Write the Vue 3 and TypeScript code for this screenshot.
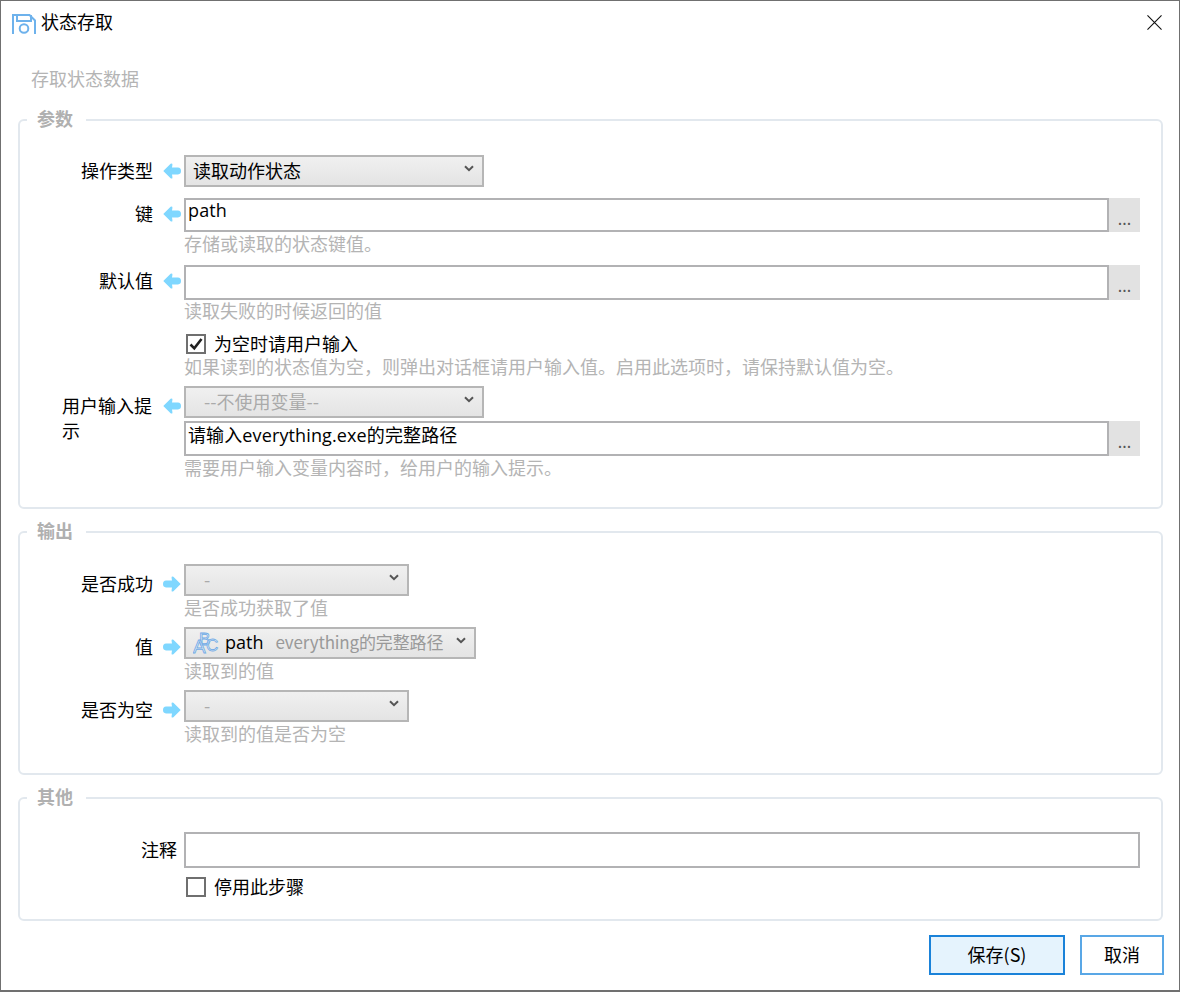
<script setup lang="ts">
interface OutputRow {
  label: string
  hint: string
  wide: boolean
}

const outputRows: OutputRow[] = [
  { label: '是否成功', hint: '是否成功获取了值', wide: false },
  { label: '值', hint: '读取到的值', wide: true },
  { label: '是否为空', hint: '读取到的值是否为空', wide: false },
]
</script>

<template>
  <div class="window">
    <svg width="0" height="0" class="defs">
      <symbol id="arrow-left" viewBox="0 0 18 16">
        <path d="M0.3 8 L7.6 0.8 Q9.6 -0.4 9.4 2 L9 4.6 H15 Q18 4.8 18 8 Q18 11.2 15 11.4 H9 L9.4 14 Q9.6 16.4 7.6 15.2 Z" fill="#7fd7ff" />
      </symbol>
      <symbol id="chevron" viewBox="0 0 10 7">
        <path d="M1 1.2 L5 5.2 L9 1.2" fill="none" stroke="#555" stroke-width="2" />
      </symbol>
    </svg>

    <header class="titlebar">
      <svg class="app-icon" width="26" height="22" viewBox="0 0 26 22" fill="none" stroke="#6eb2ec" stroke-width="2">
        <path d="M2 21 V2 H18.5 L24 7.5 V21" />
        <path d="M6 2 V8 H20 V2" />
        <circle cx="13" cy="15.5" r="4.3" />
      </svg>
      <span class="title">状态存取</span>
      <svg class="close" width="15" height="15" viewBox="0 0 16 16" stroke="#111" stroke-width="1.2">
        <path d="M0.5 0.5 L15.5 15.5 M15.5 0.5 L0.5 15.5" />
      </svg>
    </header>

    <p class="subtitle">存取状态数据</p>

    <section class="group group-params">
      <h2 class="legend">参数</h2>

      <div class="row">
        <label class="label">操作类型</label>
        <svg class="arrow" width="18" height="16"><use href="#arrow-left" /></svg>
        <div class="select select-main">
          <span>读取动作状态</span>
          <svg class="chev" width="10" height="7"><use href="#chevron" /></svg>
        </div>
      </div>

      <div class="row row-key">
        <label class="label">键</label>
        <svg class="arrow" width="18" height="16"><use href="#arrow-left" /></svg>
        <div>
          <div class="input-line">
            <div class="input">path</div>
            <div class="more">...</div>
          </div>
          <div class="hint">存储或读取的状态键值。</div>
        </div>
      </div>

      <div class="row row-default">
        <label class="label">默认值</label>
        <svg class="arrow" width="18" height="16"><use href="#arrow-left" /></svg>
        <div>
          <div class="input-line tall">
            <div class="input"></div>
            <div class="more">...</div>
          </div>
          <div class="hint hint-up">读取失败的时候返回的值</div>
        </div>
      </div>

      <div class="row row-check">
        <div class="control">
          <div class="check-line">
            <span class="checkbox">
              <svg width="16" height="16" viewBox="0 0 16 16" fill="none" stroke="#222" stroke-width="2.6">
                <path d="M2.5 8.5 L6.3 12.3 L13.5 3" />
              </svg>
            </span>
            <span class="check-text">为空时请用户输入</span>
          </div>
          <div class="hint">如果读到的状态值为空，则弹出对话框请用户输入值。启用此选项时，请保持默认值为空。</div>
        </div>
      </div>

      <div class="row row-prompt">
        <label class="label label-low">用户输入提示</label>
        <svg class="arrow arrow-low" width="18" height="16"><use href="#arrow-left" /></svg>
        <div>
          <div class="select select-main disabled">
            <span>--不使用变量--</span>
            <svg class="chev" width="10" height="7"><use href="#chevron" /></svg>
          </div>
          <div class="input-line tall prompt-input">
            <div class="input">请输入everything.exe的完整路径</div>
            <div class="more">...</div>
          </div>
          <div class="hint">需要用户输入变量内容时，给用户的输入提示。</div>
        </div>
      </div>
    </section>

    <section class="group group-output">
      <h2 class="legend">输出</h2>

      <div v-for="row in outputRows" :key="row.label" class="row row-output">
        <label class="label label-low">{{ row.label }}</label>
        <svg class="arrow arrow-low flip" width="18" height="16"><use href="#arrow-left" /></svg>
        <div>
          <div v-if="row.wide" class="select select-value">
            <svg class="var-icon" width="26" height="26" viewBox="0 0 26 26">
              <text x="6" y="15" class="var-letter">B</text>
              <text x="13" y="21" class="var-letter">C</text>
              <text x="0" y="23" class="var-letter var-a">A</text>
            </svg>
            <span class="var-name">path</span>
            <span class="var-desc">everything的完整路径</span>
            <svg class="chev" width="10" height="7"><use href="#chevron" /></svg>
          </div>
          <div v-else class="select select-output disabled">
            <span>-</span>
            <svg class="chev" width="10" height="7"><use href="#chevron" /></svg>
          </div>
          <div class="hint">{{ row.hint }}</div>
        </div>
      </div>
    </section>

    <section class="group group-other">
      <h2 class="legend">其他</h2>

      <div class="row row-comment">
        <label class="label label-wide">注释</label>
        <div class="control">
          <div class="input input-solo"></div>
          <div class="check-line check-off">
            <span class="checkbox"></span>
            <span class="check-text">停用此步骤</span>
          </div>
        </div>
      </div>
    </section>

    <footer class="footer">
      <button class="btn btn-primary" type="button">保存(S)</button>
      <button class="btn btn-cancel" type="button">取消</button>
    </footer>
  </div>
</template>

<style>
html,
body {
  margin: 0;
  background: #fff;
}
</style>

<style scoped>
.window {
  box-sizing: border-box;
  width: 1180px;
  height: 992px;
  border: 1px solid #707070;
  border-bottom-width: 2px;
  background: #fff;
  color: #000;
  font-family: "Noto Sans CJK SC", "Open Sans", sans-serif;
  font-size: 18px;
  line-height: 24px;
  overflow: hidden;
}

.defs {
  position: absolute;
}

.titlebar {
  display: flex;
  align-items: center;
  height: 43px;
  padding: 0 16px 0 10px;
}

.app-icon {
  margin-top: 3px;
}

.title {
  margin: -3px 0 0 4px;
  flex: 1;
}

.close {
  margin-right: 1px;
}

.subtitle {
  margin: 22px 0 29px 30px;
  color: #b4b4b4;
}

.group {
  position: relative;
  box-sizing: border-box;
  margin: 0 16px 0 17px;
  border: 2px solid #e2e8ee;
  border-radius: 6px;
  padding: 0 21px 27px 0;
}

.group-output,
.group-other {
  margin-top: 22px;
}

.group-params {
  padding-top: 34px;
}

.group-output {
  padding-top: 31px;
}

.group-other {
  padding-top: 33px;
  padding-bottom: 22px;
}

.legend {
  position: absolute;
  left: 7px;
  top: -15px;
  margin: 0;
  padding: 0 13px 0 10px;
  background: #fff;
  color: #b0b0b0;
  font-size: 18px;
  font-weight: 700;
  line-height: 24px;
}

.row {
  display: grid;
  grid-template-columns: 134px 30px 1fr;
  align-items: start;
}

.row-key {
  margin-top: 11px;
}

.row-default {
  margin-top: 9px;
}

.row-check {
  margin-top: 11px;
}

.row-prompt {
  margin-top: 7px;
}

.row-output + .row-output {
  margin-top: 7px;
}

.label {
  justify-self: end;
  max-width: 91px;
  padding: 3px 1px 0 0;
  text-align: left;
  line-height: 25px;
}

.label-low {
  padding-top: 7px;
}

.label-wide {
  grid-column: 1 / span 2;
  max-width: none;
  padding: 5px 7px 0 0;
}

.arrow {
  margin: 8px 0 0 9px;
}

.arrow-low {
  margin-top: 12px;
}

.flip {
  transform: scaleX(-1);
}

.control {
  grid-column: 3;
  min-width: 0;
}

.select {
  position: relative;
  display: flex;
  align-items: center;
  box-sizing: border-box;
  height: 32px;
  border: 2px solid #b6b6b6;
  padding-bottom: 2px;
  background: linear-gradient(#f0f0f0, #e4e4e4);
  line-height: 24px;
}

.select-main {
  width: 300px;
  padding-left: 7px;
}

.select-output {
  width: 225px;
  padding-left: 18px;
}

.select-value {
  width: 292px;
  padding-left: 7px;
}

.disabled {
  color: #aaa;
}

.select-main.disabled {
  padding-left: 18px;
}

.chev {
  position: absolute;
  right: 8px;
  top: 8px;
}

.input-line {
  display: flex;
  height: 34px;
}

.tall {
  height: 35px;
}

.prompt-input {
  margin-top: 3px;
}

.prompt-input .input {
  padding-top: 2px;
}

.input {
  flex: 1;
  box-sizing: border-box;
  min-width: 0;
  border: 2px solid #b2b2b4;
  padding: 0 0 0 2px;
  font-family: "Open Sans", "Noto Sans CJK SC", sans-serif;
  letter-spacing: 0.12px;
  line-height: 20px;
  background: #fff;
}

.input-solo {
  height: 36px;
}

.more {
  width: 31px;
  background: #e2e2e2;
  color: #555;
  font-size: 16px;
  line-height: 40px;
  text-align: center;
}

.hint {
  padding-bottom: 2px;
  color: #b4b4b4;
  line-height: 22px;
}

.hint-up {
  margin-top: -1px;
}

.check-line {
  display: flex;
  align-items: center;
  gap: 8px;
  height: 20px;
  margin-left: 2px;
  line-height: 20px;
}

.check-text {
  padding-bottom: 2px;
}

.row-check .hint {
  margin-top: 1px;
}

.check-off {
  margin-top: 9px;
}

.checkbox {
  display: flex;
  align-items: center;
  justify-content: center;
  box-sizing: border-box;
  width: 20px;
  height: 20px;
  border: 2px solid #6f6f6f;
  background: #fff;
}

.var-icon {
  flex: none;
  margin: 1px 6px 0 0;
}

.var-letter {
  font-family: "Liberation Sans", sans-serif;
  font-size: 17px;
  fill: rgba(225, 238, 250, 0.6);
  stroke: #72abe6;
  stroke-width: 0.8;
}

.var-a {
  font-size: 19px;
}

.var-name {
  margin-right: 12px;
  font-family: "Open Sans", "Noto Sans CJK SC", sans-serif;
}

.var-desc {
  color: #999;
  font-size: 17px;
  letter-spacing: -0.15px;
}

.footer {
  display: flex;
  justify-content: flex-end;
  gap: 15px;
  margin: 14px 15px 0 0;
}

.btn {
  box-sizing: border-box;
  height: 40px;
  border: 2px solid #59a7e6;
  border-radius: 0;
  padding: 0 0 2px;
  background: #fff;
  color: #000;
  font: inherit;
}

.btn-primary {
  width: 136px;
  border-color: #1a82d9;
  background: #e5f3fd;
}

.btn-cancel {
  width: 84px;
}
</style>
